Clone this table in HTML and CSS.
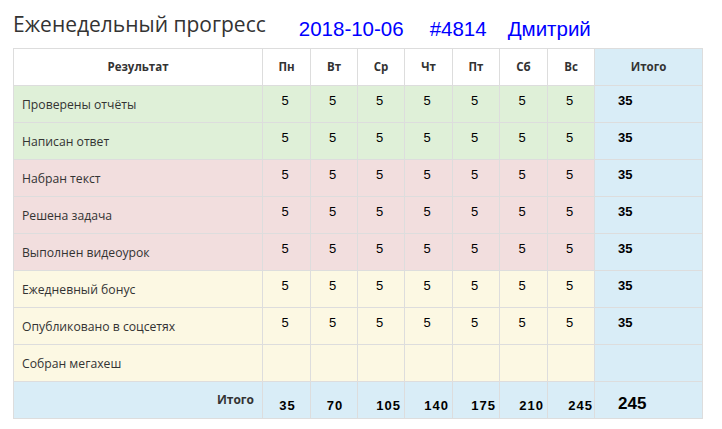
FILE: index.html
```html
<!DOCTYPE html>
<html lang="ru">
<head>
<meta charset="utf-8">
<title>Еженедельный прогресс</title>
<link rel="stylesheet" href="styles.css">
</head>
<body>
<div class="page">
  <div class="head">
    <h1 class="title">Еженедельный прогресс</h1>
    <span class="meta meta-date">2018-10-06</span>
    <span class="meta meta-id">#4814</span>
    <span class="meta meta-name">Дмитрий</span>
  </div>
  <table class="grid">
    <colgroup>
      <col class="c-label"><col class="c-d1"><col class="c-d2"><col class="c-d3"><col class="c-d4"><col class="c-d5"><col class="c-d6"><col class="c-d7"><col class="c-total">
    </colgroup>
    <thead>
      <tr>
        <th>Результат</th><th>Пн</th><th>Вт</th><th>Ср</th><th>Чт</th><th>Пт</th><th>Сб</th><th>Вс</th><th class="info">Итого</th>
      </tr>
    </thead>
    <tbody>
      <tr class="success"><td class="label">Проверены отчёты</td><td class="num">5</td><td class="num">5</td><td class="num">5</td><td class="num">5</td><td class="num">5</td><td class="num">5</td><td class="num">5</td><td class="info sum">35</td></tr>
      <tr class="success"><td class="label">Написан ответ</td><td class="num">5</td><td class="num">5</td><td class="num">5</td><td class="num">5</td><td class="num">5</td><td class="num">5</td><td class="num">5</td><td class="info sum">35</td></tr>
      <tr class="danger"><td class="label">Набран текст</td><td class="num">5</td><td class="num">5</td><td class="num">5</td><td class="num">5</td><td class="num">5</td><td class="num">5</td><td class="num">5</td><td class="info sum">35</td></tr>
      <tr class="danger"><td class="label">Решена задача</td><td class="num">5</td><td class="num">5</td><td class="num">5</td><td class="num">5</td><td class="num">5</td><td class="num">5</td><td class="num">5</td><td class="info sum">35</td></tr>
      <tr class="danger"><td class="label">Выполнен видеоурок</td><td class="num">5</td><td class="num">5</td><td class="num">5</td><td class="num">5</td><td class="num">5</td><td class="num">5</td><td class="num">5</td><td class="info sum">35</td></tr>
      <tr class="warning"><td class="label">Ежедневный бонус</td><td class="num">5</td><td class="num">5</td><td class="num">5</td><td class="num">5</td><td class="num">5</td><td class="num">5</td><td class="num">5</td><td class="info sum">35</td></tr>
      <tr class="warning"><td class="label">Опубликовано в соцсетях</td><td class="num">5</td><td class="num">5</td><td class="num">5</td><td class="num">5</td><td class="num">5</td><td class="num">5</td><td class="num">5</td><td class="info sum">35</td></tr>
      <tr class="warning"><td class="label">Собран мегахеш</td><td class="num"></td><td class="num"></td><td class="num"></td><td class="num"></td><td class="num"></td><td class="num"></td><td class="num"></td><td class="info sum"></td></tr>
    </tbody>
    <tfoot>
      <tr class="info">
        <th class="foot-label">Итого</th>
        <td class="foot-num short">35</td>
        <td class="foot-num short">70</td>
        <td class="foot-num">105</td>
        <td class="foot-num">140</td>
        <td class="foot-num">175</td>
        <td class="foot-num">210</td>
        <td class="foot-num last">245</td>
        <td class="foot-total">245</td>
      </tr>
    </tfoot>
  </table>
</div>
</body>
</html>
```

FILE: styles.css
```css
html, body {
  margin: 0;
  padding: 0;
  background: #ffffff;
}

body {
  font-family: "Open Sans", "DejaVu Sans", sans-serif;
  color: #333333;
}

.page {
  padding: 9px 0 0 13px;
}

.head {
  display: flex;
  align-items: flex-start;
  height: 39px;
}

.title {
  margin: 0;
  font-family: "Open Sans", sans-serif;
  font-weight: 400;
  font-size: 21px;
  line-height: 30px;
  color: #333333;
}

.meta {
  font-family: "Liberation Sans", Arial, sans-serif;
  font-size: 20.5px;
  line-height: 23px;
  margin-top: 8px;
  color: #0000ff;
}

.meta-date { margin-left: 33px; }
.meta-id { margin-left: 26px; }
.meta-name { margin-left: 21px; }

.grid {
  border-collapse: collapse;
  table-layout: fixed;
  width: 689px;
  border: 1px solid #dddddd;
}

.c-label { width: 249px; }
.c-d1 { width: 48px; }
.c-d2 { width: 47px; }
.c-d3 { width: 47px; }
.c-d4 { width: 48px; }
.c-d5 { width: 47px; }
.c-d6 { width: 48px; }
.c-d7 { width: 47px; }
.c-total { width: 108px; }

.grid th,
.grid td {
  border: 1px solid #dddddd;
  padding: 8px;
  line-height: 20px;
  height: 20px;
  vertical-align: top;
}

.grid thead th {
  font-family: "Open Sans", sans-serif;
  font-weight: 700;
  font-size: 11.5px;
  text-align: center;
  vertical-align: middle;
  color: #333333;
  background: #ffffff;
}

.grid thead th.info {
  background: #d9edf7;
}

.success td { background: #dff0d8; }
.danger td { background: #f2dede; }
.warning td { background: #fcf8e3; }
.grid td.info,
.grid tr.info th,
.grid tr.info td { background: #d9edf7; }

.label {
  font-family: "Open Sans", sans-serif;
  font-size: 12.2px;
  color: #333333;
  text-align: left;
  padding-top: 9px !important;
  padding-bottom: 7px !important;
}

.num {
  font-family: "Liberation Sans", Arial, sans-serif;
  font-size: 13px;
  color: #000000;
  text-align: center;
  padding-top: 5px !important;
  padding-bottom: 11px !important;
  padding-right: 11px !important;
  padding-left: 8px !important;
}

.sum {
  font-family: "Liberation Sans", Arial, sans-serif;
  font-size: 13px;
  font-weight: 700;
  color: #000000;
  text-align: left;
  padding-left: 23px !important;
  padding-top: 5px !important;
  padding-bottom: 11px !important;
}

.foot-label {
  font-family: "Open Sans", sans-serif;
  font-size: 12px;
  font-weight: 700;
  text-align: right;
  color: #333333;
}

.foot-num {
  font-family: "Liberation Sans", Arial, sans-serif;
  font-size: 13px;
  font-weight: 700;
  letter-spacing: 1px;
  color: #000000;
  text-align: right;
  padding-right: 3px !important;
  padding-top: 14px !important;
  padding-bottom: 2px !important;
}

.foot-num.short {
  text-align: center;
  padding-right: 8px !important;
  padding-left: 10px !important;
}

.foot-num.last {
  padding-right: 1px !important;
}

.foot-total {
  font-family: "Liberation Sans", Arial, sans-serif;
  font-size: 17px;
  font-weight: 700;
  color: #000000;
  text-align: left;
  padding-left: 23px !important;
  padding-top: 12px !important;
  padding-bottom: 4px !important;
}
```
